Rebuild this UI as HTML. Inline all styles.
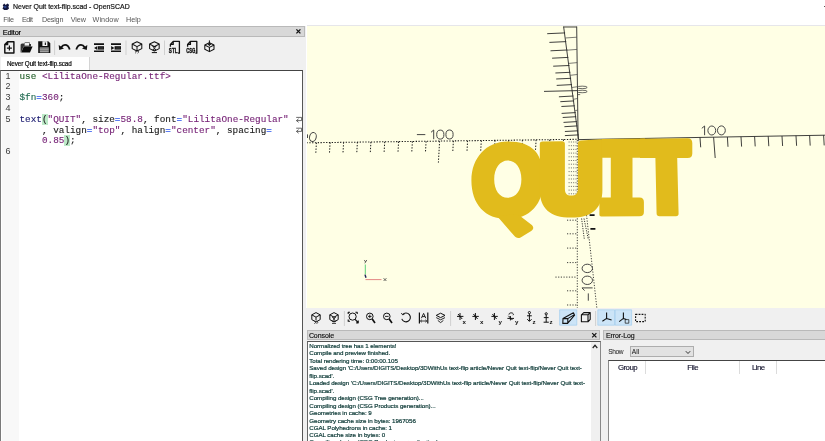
<!DOCTYPE html>
<html><head><meta charset="utf-8">
<style>
html,body{margin:0;padding:0;}
body{width:825px;height:441px;overflow:hidden;background:#fff;position:relative;-webkit-font-smoothing:antialiased;font-family:"Liberation Sans",sans-serif;}
.a{position:absolute;white-space:nowrap;}
.t{position:absolute;white-space:nowrap;line-height:1;}
#code .l{position:absolute;left:19.5px;font-family:"Liberation Mono",monospace;font-size:9.35px;line-height:11px;white-space:pre;color:#1c1c1c;-webkit-text-stroke:0.12px;}
#code .n{position:absolute;left:5.5px;font-family:"Liberation Sans",sans-serif;font-size:9px;line-height:11px;color:#3c3c3c;}
.g{color:#1f5c26}.p{color:#741f74}.b{color:#2a55ee}.k{color:#1b1b70}.v{color:#1f6a50}
.hl{background:#bdeac8}
.con{position:absolute;left:309.3px;font-size:6.2px;line-height:7.5px;color:#0b3835;white-space:nowrap;letter-spacing:-0.06px;-webkit-text-stroke:0.2px #0b3835;}
</style></head><body>
<div id="root" style="position:absolute;left:0;top:0;width:825px;height:441px;will-change:transform;filter:contrast(1.0001);">
<!-- title bar -->
<svg class="a" style="left:1.8px;top:2.7px" width="7.4" height="7.4" viewBox="0 0 10 10"><path d="M1 3 L3 0.6 L5 2.6 L7.4 0.8 L9.6 2.6 L8.6 5 L9.6 7.4 L7 9.5 L3 9.5 L0.6 7.6 L2 5 Z" fill="#14173c"/><circle cx="4.4" cy="5.4" r="1.7" fill="#2a4590"/></svg>
<div class="t" id="title" style="left:12.8px;top:3.1px;font-size:7.7px;color:#111;-webkit-text-stroke:0.2px #111;transform-origin:0 0;transform:scaleX(0.9044);">Never Quit text-flip.scad - OpenSCAD</div>
<!-- menu -->
<div class="t m" id="mFile" style="letter-spacing:-0.223px;left:3.2px;top:16.4px;font-size:7.2px;color:#555;">File</div>
<div class="t m" id="mEdit" style="letter-spacing:-0.423px;left:21.9px;top:16.4px;font-size:7.2px;color:#555;">Edit</div>
<div class="t m" id="mDesign" style="letter-spacing:-0.163px;left:41.9px;top:16.4px;font-size:7.2px;color:#555;">Design</div>
<div class="t m" id="mView" style="letter-spacing:-0.038px;left:70.7px;top:16.4px;font-size:7.2px;color:#555;">View</div>
<div class="t m" id="mWindow" style="letter-spacing:0.120px;left:92.5px;top:16.4px;font-size:7.2px;color:#555;">Window</div>
<div class="t m" id="mHelp" style="letter-spacing:0.026px;left:126px;top:16.4px;font-size:7.2px;color:#555;">Help</div>
<!-- left panel bg -->
<div class="a" style="left:0;top:25.5px;width:306.3px;height:416px;background:#f0f0f0;"></div>
<!-- editor header -->
<div class="a" style="left:0;top:26.1px;width:304.6px;height:10.7px;background:#d8d8d8;border:1px solid #b9b9b9;border-left:none;box-sizing:border-box;"></div>
<div class="t" id="edh" style="letter-spacing:-0.185px;left:2.7px;top:28.5px;font-size:7.4px;color:#000;-webkit-text-stroke:0.15px #000;">Editor</div>
<svg class="a" style="left:294.8px;top:28.3px" width="7" height="7" viewBox="0 0 7 7"><path d="M1.4 1.4 L5.4 5.4 M5.4 1.4 L1.4 5.4" stroke="#111" stroke-width="1.3" fill="none"/></svg>
<!-- toolbar placeholder -->
<svg id="tb1" class="a" style="left:0;top:38px" width="306" height="20" viewBox="0 38 306 20">
<g fill="none" stroke="#111" stroke-width="1.45" stroke-linejoin="round">
<!-- new -->
<path d="M7.6 41.8H13.9V53H4.8V44.6Z M7.6 41.8V44.6H4.8"/>
<path d="M9.4 45.6V50.6M6.9 48.1H11.9" stroke-width="1.2"/>
</g>
<!-- open -->
<path d="M20.6 52.4V44.4L21.8 43.4H24L25 42.2H29.6V44H31V46.4H23.6L21 52.4Z" fill="#333"/>
<path d="M23.8 46.6H32.6L30 52.6H21.2Z" fill="#0a0a0a"/>
<path d="M24.6 42.8H29V45.6H24.6Z" fill="#f0f0f0"/>
<!-- save -->
<path d="M38.2 41.2H48.2L50.3 43.3V53.1H38.2Z" fill="#111"/>
<path d="M42.4 41.2H47.4V46H42.4Z" fill="#f4f4f4"/><path d="M44.8 42.4H45.9V45H44.8Z" fill="#111"/>
<path d="M39.8 47.4H48.8V52.4H39.8Z" fill="#a8a8a8"/>
<path d="M39.8 48.8H48.8M39.8 50.6H48.8" stroke="#555" stroke-width="0.6"/>
<!-- sep -->
<path d="M54.6 40.5V55M126 40.5V55M164.5 40.5V55" stroke="#d0d0d0" stroke-width="1"/>
<!-- undo -->
<path d="M69.7 49.4C68.8 46.4 67.2 44.9 65 44.9C63.4 44.9 62.2 45.8 61.4 47.2" fill="none" stroke="#111" stroke-width="1.8"/>
<path d="M58.7 45L59.2 50L64 48.6Z" fill="#111"/>
<!-- redo -->
<path d="M76.3 49.4C77.2 46.4 78.8 44.9 81 44.9C82.6 44.9 83.8 45.8 84.6 47.2" fill="none" stroke="#111" stroke-width="1.8"/>
<path d="M87.3 45L86.8 50L82 48.6Z" fill="#111"/>
<!-- unindent -->
<path d="M94 44.1H104M94 51.3H104" stroke="#111" stroke-width="1.6"/>
<path d="M98 46.2H104V49.6H98Z" fill="#111"/><path d="M99 48H103.4" stroke="#666" stroke-width="0.6"/>
<path d="M94.1 47.9L97.4 45.9V49.9Z" fill="#111"/>
<!-- indent -->
<path d="M111 44.1H121M111 51.3H121" stroke="#111" stroke-width="1.6"/>
<path d="M114.6 46.2H121V49.6H114.6Z" fill="#111"/><path d="M115.8 48H120.4" stroke="#666" stroke-width="0.6"/>
<path d="M114.4 47.9L111.1 45.9V49.9Z" fill="#111"/>
<!-- preview cube -->
<g fill="none" stroke="#111" stroke-width="1.05" stroke-linejoin="round">
<path d="M137 41.8L141.8 44V48.6L137 51L132.2 48.6V44Z M132.6 44.2L137 46.6L141.4 44.2M137 46.6V50.4"/>
<path d="M135.2 50.8L136.4 52L135.2 53.2M137.6 50.8L138.8 52L137.6 53.2" stroke-width="0.8"/>
<!-- render cube -->
<path d="M154.4 41.8L159.2 44V48.6L154.4 51L149.6 48.6V44Z M150 44.2L154.4 46.6L158.8 44.2" />
<path d="M152.8 46.4H156L152.8 50H156Z" stroke-width="0.9"/><path d="M151.8 52.6H157" stroke-width="1"/>
<!-- STL -->
<path d="M170.4 46.8V44.4L173.2 41.4H179.4V53.2H178M173.2 41.4V44.4H170.4" stroke-width="1.3"/>
<!-- CSG -->
<path d="M187.6 46.8V44.4L190.4 41.4H196.8V53.2H195.4M190.4 41.4V44.4H187.6" stroke-width="1.3"/>
<!-- 3d print cube -->
<path d="M209.4 42.8L214 45V49.2L209.4 51.6L204.8 49.2V45ZM205.2 45.2L209.4 47.4L213.6 45.2M209.4 47.4V51.4"/>
<path d="M209.4 40.4V45.4M207.8 43.8L209.4 45.6L211 43.8" stroke-width="1"/>
</g>
<g font-family="Liberation Sans, sans-serif" font-weight="bold" font-size="6.4" fill="#111" stroke="#111" stroke-width="0.35">
<text x="168.8" y="52.9" textLength="8.8" lengthAdjust="spacingAndGlyphs">STL</text>
<text x="186.2" y="52.9" textLength="9.2" lengthAdjust="spacingAndGlyphs">CSG</text>
</g>
</svg>
<!-- tab -->
<div class="a" style="left:0.5px;top:57.1px;width:88px;height:13.4px;background:#fff;border-right:1px solid #d4d4d4;"></div>
<div class="t" id="tab" style="letter-spacing:-0.100px;left:6.9px;top:61.1px;font-size:6.3px;color:#0a0a0a;-webkit-text-stroke:0.2px #0a0a0a;">Never Quit text-flip.scad</div>
<!-- editor -->
<div class="a" style="left:0.4px;top:69.8px;width:302.8px;height:372px;background:#fff;border-top:1px solid #444;border-right:1px solid #555;border-left:1.3px solid #7a7a7a;box-sizing:border-box;"></div>
<div class="a" style="left:1.7px;top:70.8px;width:17px;height:371px;background:#f8f8f8;"></div>
<div id="code">
<div class="n" style="top:70.5px">1</div><div class="l" style="top:70.5px"><span class="g">use</span> <span class="p">&lt;LilitaOne-Regular.ttf&gt;</span></div>
<div class="n" style="top:81.2px">2</div>
<div class="n" style="top:91.8px">3</div><div class="l" style="top:91.8px"><span class="v">$fn</span><span class="b">=</span><span class="p">360</span>;</div>
<div class="n" style="top:102.5px">4</div>
<div class="n" style="top:113.5px">5</div><div class="l" style="top:113.5px"><span class="k">text</span><span class="hl">(</span><span class="p">"QUIT"</span>, size<span class="b">=</span><span class="p">58.8</span>, font<span class="b">=</span><span class="p">"LilitaOne-Regular"</span></div>
<div class="l" style="top:124.5px">    , valign<span class="b">=</span><span class="p">"top"</span>, halign<span class="b">=</span><span class="p">"center"</span>, spacing<span class="b">=</span></div>
<div class="l" style="top:134.9px">    <span class="p">0.85</span><span class="hl">)</span>;</div>
<div class="n" style="top:145.5px">6</div>
</div>
<svg class="a" style="left:295px;top:115px" width="8" height="20" viewBox="295 115 8 20"><g fill="none" stroke="#444" stroke-width="0.8"><path d="M296.2 117.4H301.6V120.6H296.6M298.6 118.8L296.4 120.6L298.6 122.4"/><path d="M296.2 128.2H301.6V131.4H296.6M298.6 129.6L296.4 131.4L298.6 133.2"/></g></svg>
<!-- 3d view -->
<div class="a" style="left:306.8px;top:25.4px;width:519px;height:282.4px;background:#ffffe5;border-top:1px solid #e6e6ea;box-sizing:border-box;"></div>
<svg id="view" class="a" style="left:307px;top:26px" width="518" height="281.8" viewBox="307 26 518 281.8">
<g fill="none" stroke="#2a2a2a" stroke-width="0.9">
<!-- vertical axis positive (two lines, perspective) -->
<path d="M563.6 26.5 L578.6 139.5 M576.7 26.5 L578.1 139.5 M563.6 27 L576.7 27"/>
<!-- ticks left -->
<path d="M547.2 33.7L565.1 32.9 M549.4 42.4L566.2 41.6 M550.5 50.8L567.4 50.0 M552.1 58.2L568.3 57.4 M553.2 66.2L569.4 65.5 M555.4 73.0L570.3 72.3 M556.2 79.0L571.1 78.3 M556.7 85.4L572.0 84.6 M544.0 91.4L577.5 90.6 M558.9 96.8L573.5 96.0 M560.3 101.7L574.1 100.9 M561.4 106.5L574.8 105.8 M561.6 113.4L575.7 112.6 M562.7 117.5L576.2 116.7 M563.5 122.4L576.9 121.6 M564.4 126.7L577.4 125.9 M564.9 131.5L578.1 130.8 M564.9 135.6L578.6 134.9"/>
<!-- short ticks between -->
<path d="M565.4 38.0L576.8 37.2 M567.0 50.2L577.0 49.4 M568.8 63.4L577.2 62.6 M570.3 75.3L577.3 74.5 M572.0 87.5L577.5 86.7 M573.5 99.3L577.6 98.5 M575.1 110.8L577.7 110.0" stroke-width="0.7" stroke="#444"/>
<!-- label near long tick -->
<g stroke-width="0.75" stroke="#3a3a3a"><ellipse cx="582.2" cy="87.4" rx="5" ry="1.25"/><ellipse cx="582.2" cy="91.5" rx="5" ry="1.25"/><path d="M578 94.6H580.2"/></g>
<!-- horizontal axis positive -->
<path d="M578.5 139.6 L825 135.2"/>
<path d="M700 137.4 L700.7 147.3 M713.6 137.2 L715.2 158 M727.4 137 L728 146.8 M741 136.7 L741.6 146.6 M754.6 136.5 L755.2 146.4 M768.2 136.2 L768.8 146.2 M782 136 L782.6 146 M796 135.7 L796.6 145.8 M809.6 135.5 L810.2 145.6 M823.6 135.2 L824.2 145.4"/>
<!-- horizontal axis negative dotted -->
<path d="M306.5 142.8 L578.5 139.3" stroke-dasharray="1.3 1.5" stroke-width="1.05" stroke="#1a1a1a"/>
<path d="M316.4 142.7L315.8 153.2 M330.1 142.5L329.5 153.0 M343.6 142.3L343.0 152.8 M357.4 142.1L356.8 152.6 M370.9 142.0L370.3 152.5 M384.7 141.8L384.1 152.3 M398.6 141.6L398.0 152.1 M412.4 141.4L411.8 151.9 M426.1 141.3L425.5 151.8 M439.6 141.1L438.4 162.6 M453.4 140.9L452.8 151.4 M467.6 140.7L467.0 151.2 M481.3 140.6L480.7 151.1 M495.0 140.4L494.4 150.9 M508.7 140.2L508.1 150.7 M522.4 140.0L521.8 150.5 M536.1 139.8L535.5 150.3 M549.8 139.7L549.2 150.2 M563.5 139.5L562.9 150.0" stroke-dasharray="1.4 1.5" stroke-width="1" stroke="#1a1a1a"/>
<!-- vertical axis negative dotted -->
<path d="M577.3 140 L577.3 308.5 M578.2 140 L596.9 308.5" stroke-dasharray="1.2 1.5"/>
<path d="M581.6 218.5 L584.3 239 M584 218.5 L588.2 239" stroke-dasharray="1.2 1.2" stroke-width="0.9" stroke="#222"/>
<path d="M567 220.2H577 M567 233.8H577 M567 248.1H577 M567 262.6H577 M555.4 277.1H577 M567 290.8H577 M567 305H577" stroke-dasharray="1.2 1.5"/>
<!-- dotted ticks under the letters near origin -->
<path d="M568.6 142.0H577 M568.6 145.7H577 M568.6 149.4H577 M568.6 153.1H577 M568.6 156.8H577 M568.6 160.5H577 M568.6 164.2H577 M568.6 167.9H577 M568.6 171.6H577 M568.6 175.3H577 M568.6 179.0H577 M568.6 182.7H577 M568.6 186.4H577 M568.6 190.1H577 M568.6 193.8H577" stroke-dasharray="1 1.3" stroke-width="0.7"/>
</g>
<!-- QUIT -->
<g fill="#e1bb1c">
<!-- Q -->
<path fill-rule="evenodd" d="M507.4 141.5 C532.6 141.5 543.4 153.1 543.4 180.3 C543.4 204.4 529.7 219.1 507.4 219.1 C485.1 219.1 471.4 204.4 471.4 180.3 C471.4 157.8 486.5 141.5 507.4 141.5 Z M507.8 160.6 C515.7 160.6 521.4 168.4 521.4 179.2 C521.4 190.3 516.0 197.7 507.8 197.7 C499.6 197.7 494.2 190.3 494.2 179.2 C494.2 168.4 499.9 160.6 507.8 160.6 Z"/>
<path d="M497 216 L514 235.6 C515.6 237.7 518 238.6 520.6 237.4 L531.2 231 C533.6 229.6 534 227 531.8 225 L517.5 214 Z"/>
<!-- U -->
<path d="M539.8 144 C539.8 142.2 540.8 141.4 542.6 141.4 L562 141.2 C563.9 141.2 564.9 142 564.9 144 L564.9 189 C564.9 193.5 567 195.6 571.3 195.6 C575.6 195.6 577.9 193.5 577.9 189 L577.9 143.6 C577.9 141.6 579 140.7 581 140.5 L600 139.3 C601.6 139.2 602.4 139.9 602.4 141.5 L602.4 190 C602.4 208.4 592.2 217.6 571.1 217.6 C550 217.6 539.8 208.4 539.8 190 Z"/>
<!-- I with serifs -->
<path d="M601.5 139 L645 138.6 L645 157.8 L632.5 157.8 L632.5 197.6 L639.5 197.6 C642.6 197.6 643.9 199.4 643.9 202 L643.9 212 C643.9 215 642.4 216.2 639.5 216.2 L601.4 216.5 C600 216.5 599.4 215.8 599.4 214.6 L599.4 197.6 L610.8 197.6 L610.8 157.8 L601.5 157.8 Z"/>
<!-- T -->
<path d="M640 138.7 L687.6 138.3 C690.8 138.3 692.3 140 692.3 143 L692.3 153.4 C692.3 156.6 690.8 158 687.6 158 L677.2 158 L678.6 213.5 C678.6 215.4 677.8 216.2 676 216.2 L659.5 216.2 C657.6 216.2 656.7 215.4 656.6 213.5 L655.4 158 L640 158 Z"/>
</g>
<!-- marks -->
<path d="M589.6 215.2H594.6 M590.4 228.8H595.4" stroke="#111" stroke-width="1.7"/>
<!-- labels -->
<g fill="none" stroke="#3c3c3c" stroke-width="0.95">
<path d="M416.9 134.6H425.3M431 132.3L433.7 130V139.2"/>
<ellipse cx="440.3" cy="134.6" rx="3.6" ry="4.5"/><ellipse cx="449.5" cy="134.5" rx="3.6" ry="4.5"/>
<ellipse cx="312.9" cy="137" rx="3.3" ry="4.5" transform="rotate(14 312.9 137)"/>
<path d="M307.5 134.4V138"/>
<path d="M701.8 128.3L704.6 126V135.2"/>
<ellipse cx="711.8" cy="130.5" rx="3.9" ry="4.5"/><ellipse cx="721.4" cy="130.4" rx="3.9" ry="4.5"/>
<path d="M588.3 293.4V300.7M584.6 290.6L582 287.9H592.6"/>
<ellipse cx="587.3" cy="280.3" rx="5.2" ry="4.2"/><ellipse cx="587.3" cy="268.4" rx="5.2" ry="4.2"/>
</g>
<!-- small axes gizmo -->
<path d="M365.3 264.5V274.5" stroke="#4ccf6a" stroke-width="0.9"/>
<path d="M365.5 279.6H381.5" stroke="#e07a7a" stroke-width="0.9"/>
<path d="M365 274.6 L366 277.8" stroke="#22225a" stroke-width="1.4"/>
<path d="M364.3 260 L365.6 262 M366.8 260 L364.8 263.3" stroke="#333" stroke-width="0.75"/>
<path d="M383.6 278.2 L386.4 281 M386.4 278.2 L383.6 281" stroke="#333" stroke-width="0.75"/>
</svg>
<!-- view toolbar -->
<div class="a" style="left:306.3px;top:307.8px;width:519px;height:22.5px;background:#f0f0f0;"></div>
<svg id="tb2" class="a" style="left:306px;top:308px" width="519" height="22" viewBox="306 308 519 22">
<!-- highlights -->
<path d="M559.6 309.8H576.8V325.2H559.6Z" fill="#cce4f7" stroke="#99c9ef" stroke-width="0.6"/>
<path d="M597.8 309.8H614.6V325.2H597.8Z" fill="#cce4f7" stroke="#99c9ef" stroke-width="0.6"/>
<path d="M615.2 309.8H631.6V325.2H615.2Z" fill="#cce4f7" stroke="#99c9ef" stroke-width="0.6"/>
<path d="M344.4 311V326M450.6 311V326M595.6 311V326" stroke="#d0d0d0" stroke-width="1"/>
<g fill="none" stroke="#111" stroke-width="1" stroke-linejoin="round">
<!-- preview -->
<path d="M316 312.6L320.2 314.8V319.6L316 322L311.8 319.6V314.8ZM311.8 314.8L316 317.2L320.2 314.8M316 317.2V320.4"/>
<path d="M314.4 321L315.8 322.4L314.4 323.8M316.6 321L318 322.4L316.6 323.8" stroke-width="0.8"/>
<!-- render -->
<path d="M334 312.6L338.2 314.8V319.6L334 322L329.8 319.6V314.8ZM329.8 314.8L334 317.2L338.2 314.8"/>
<path d="M332.4 317H335.6L332.4 321.4H335.6ZM332 323.4H336" stroke-width="0.8"/>
<!-- view all -->
<circle cx="352.6" cy="316.6" r="3.6"/>
<path d="M355.2 319.4L358 322.6M356.2 322.8H358.2V320.6" stroke-width="1.2"/>
<path d="M348.2 314V312.2H350M355.4 312.2H357.2V314M348.2 319.4V321.2H350" stroke-width="1.1"/>
<!-- zoom in -->
<circle cx="369.8" cy="316.4" r="3.3"/>
<path d="M372.2 319L375 323" stroke-width="1.7"/>
<path d="M368 316.4H371.6M369.8 314.6V318.2" stroke-width="0.9"/>
<!-- zoom out -->
<circle cx="386.8" cy="316.4" r="3.3"/>
<path d="M389.2 319L392 323" stroke-width="1.7"/>
<path d="M385 316.4H388.6" stroke-width="0.9"/>
<!-- reset view -->
<path d="M402.6 314.6A4.4 4.4 0 1 1 401.8 318.8" stroke-width="1.1"/>
<path d="M401.2 313L402.8 315L404.8 313.8" stroke-width="0.8"/>
<!-- ortho/persp measure -->
<path d="M419.4 312.4V323.4M427.8 312.4V323.4" stroke-width="1.2"/>
<path d="M420.6 321H426.6M421.8 319.8L420.4 321L421.8 322.2M425.4 319.8L426.8 321L425.4 322.2" stroke-width="0.8"/>
<path d="M421.4 318.2L423.6 313.4L425.8 318.2M422.2 316.6H425" stroke-width="0.9"/>
<!-- layers -->
<path d="M440.6 313.2L445 315.4L440.6 317.6L436.2 315.4Z"/>
<path d="M436.2 317.6L440.6 319.8L445 317.6M437.8 320.4L440.6 322.6L443.4 320.4" stroke-width="0.9"/>
</g>
<!-- view direction icons -->
<g fill="none" stroke="#111" stroke-width="1">
<path d="M460 313V320M457 316.4H463.4M458 314L462.2 319"/>
<path d="M475.4 313V320M472.4 316.4H478.8M473.4 314L477.6 319"/>
<path d="M494.4 313V320M491.4 316.4H497.8M492.4 314L496.6 319"/>
<path d="M510.4 316V320.4M507.4 318.4H514M508.4 315.8L512.4 320M509 314.6A2.2 1.5 0 1 1 513 315.2"/>
<circle cx="529.4" cy="312.6" r="1.1"/>
<path d="M529.4 313.6V321M527 315.8H531.8M527.2 319.2L529.4 321.4L531.6 319.2"/>
<circle cx="546.2" cy="313.8" r="1.1"/>
<path d="M546.2 315V322.2M543.8 317.6H548.6M543.6 322.2H548.8"/>
</g>
<g font-family="Liberation Sans, sans-serif" font-weight="bold" font-size="6.2" fill="#111">
<text x="462.6" y="324.2">x</text>
<text x="480" y="324.2">x</text>
<text x="498.4" y="323.8">y</text>
<text x="515" y="323.8">y</text>
<text x="532.4" y="324.2">z</text>
<text x="549.4" y="324.2">z</text>
</g>
<g fill="none" stroke="#111" stroke-width="1.1" stroke-linejoin="round">
<!-- perspective -->
<path d="M563 318.6L573.4 312.8L574.6 315.2L567.6 323.4H562.8Z M563 318.6H567.8V323.2M567.8 318.6L574.4 314.6"/>
<!-- orthogonal -->
<path d="M581.4 314.8H588V321.8H581.4ZM581.4 314.8L583.8 312.6H590.2V319.4L588 321.8M588 314.8L590.2 312.6"/>
<!-- axes -->
<path d="M606.6 312.6V318.4L602.4 321.2M606.6 318.4L611.6 320"/>
<!-- scales -->
<path d="M623.4 312.6V318.4L619.2 321.6M623.4 318.4L626.4 319.4"/>
<path d="M625.2 319.6H628.8V323.2H625.2Z" stroke-width="0.7"/>
<!-- edges -->
<path d="M635.6 314.4H645.2V321.6H635.6Z" stroke-dasharray="1.8 1.2" stroke-width="1.1"/>
</g>
</svg>
<!-- console -->
<div class="a" style="left:306.3px;top:330px;width:519px;height:111px;background:#f0f0f0;"></div>
<div class="a" style="left:306.8px;top:329.7px;width:293.2px;height:10.5px;background:#d8d8d8;border:1px solid #b9b9b9;box-sizing:border-box;"></div>
<div class="t" id="conh" style="letter-spacing:-0.084px;left:308.9px;top:331.9px;font-size:7px;color:#111;-webkit-text-stroke:0.15px #111;">Console</div>
<svg class="a" style="left:590.8px;top:331.8px" width="7" height="7" viewBox="0 0 7 7"><path d="M1.2 1.2 L5.4 5.4 M5.4 1.2 L1.2 5.4" stroke="#111" stroke-width="1.2" fill="none"/></svg>
<div class="a" style="left:307.2px;top:341px;width:293.6px;height:101px;background:#fff;border-top:1px solid #555;border-left:1px solid #666;border-right:1px solid #888;box-sizing:border-box;"></div>
<div class="a" style="left:590.8px;top:342px;width:9px;height:100px;background:#f0f0f0;"></div>
<svg class="a" style="left:592px;top:343.5px" width="6" height="5" viewBox="0 0 6 5"><path d="M0.7 4 L3 1.3 L5.3 4" stroke="#222" stroke-width="1.2" fill="none"/></svg>
<div id="con">
<div class="con" style="top:342.1px">Normalized tree has 1 elements!</div>
<div class="con" style="top:349px">Compile and preview finished.</div>
<div class="con" style="top:357px">Total rendering time: 0:00:00.105</div>
<div class="con" style="top:364.3px">Saved design 'C:/Users/DIGITS/Desktop/3DWithUs text-flip article/Never Quit text-flip/Never Quit text-</div>
<div class="con" style="top:371.7px">flip.scad'.</div>
<div class="con" style="top:379.2px">Loaded design 'C:/Users/DIGITS/Desktop/3DWithUs text-flip article/Never Quit text-flip/Never Quit text-</div>
<div class="con" style="top:386.6px">flip.scad'.</div>
<div class="con" style="top:394.2px">Compiling design (CSG Tree generation)...</div>
<div class="con" style="top:401.6px">Compiling design (CSG Products generation)...</div>
<div class="con" style="top:409.2px">Geometries in cache: 9</div>
<div class="con" style="top:416.8px">Geometry cache size in bytes: 1967056</div>
<div class="con" style="top:424.4px">CGAL Polyhedrons in cache: 1</div>
<div class="con" style="top:431.2px">CGAL cache size in bytes: 0</div>
<div class="con" style="top:437.8px">Compiling design (CSG Products normalization)...</div>
</div>
<!-- error log -->
<div class="a" style="left:603px;top:329.8px;width:223px;height:10.3px;background:#d8d8d8;border:1px solid #b9b9b9;box-sizing:border-box;"></div>
<div class="t" id="errh" style="letter-spacing:-0.098px;left:605.9px;top:331.9px;font-size:7px;color:#111;-webkit-text-stroke:0.15px #111;">Error-Log</div>
<div class="t" id="show" style="letter-spacing:-0.425px;left:608.3px;top:349.4px;font-size:6.6px;color:#111;">Show</div>
<div class="a" style="left:630px;top:346.4px;width:63.8px;height:10.2px;background:#e2e2e2;border:1px solid #adadad;box-sizing:border-box;"></div>
<div class="t" id="all" style="letter-spacing:0.024px;left:631.8px;top:349.4px;font-size:6.6px;color:#111;">All</div>
<svg class="a" style="left:684.8px;top:349.6px" width="6" height="5" viewBox="0 0 6 5"><path d="M0.8 1.2 L3 3.5 L5.2 1.2" stroke="#333" stroke-width="1" fill="none"/></svg>
<div class="a" style="left:608px;top:359.6px;width:218px;height:82px;background:#fff;border-top:1px solid #444;border-left:1px solid #8a8a8a;box-sizing:border-box;"></div>
<div class="a" style="left:645.3px;top:361px;width:1px;height:13px;background:#dcdcdc;"></div>
<div class="a" style="left:739.2px;top:361px;width:1px;height:13px;background:#dcdcdc;"></div>
<div class="a" style="left:775.8px;top:361px;width:1px;height:13px;background:#dcdcdc;"></div>
<div class="t" id="hg" style="letter-spacing:-0.474px;left:617.9px;top:363.8px;font-size:7.8px;color:#15152e;-webkit-text-stroke:0.15px #15152e;">Group</div>
<div class="t" id="hf" style="letter-spacing:-0.420px;left:687.3px;top:363.8px;font-size:7.8px;color:#15152e;-webkit-text-stroke:0.15px #15152e;">File</div>
<div class="t" id="hl" style="letter-spacing:-0.537px;left:752px;top:363.8px;font-size:7.8px;color:#15152e;-webkit-text-stroke:0.15px #15152e;">Line</div>
<div class="a" style="left:823.5px;top:5.5px;width:1.5px;height:1.5px;background:#555;"></div>
</div>
</body></html>
